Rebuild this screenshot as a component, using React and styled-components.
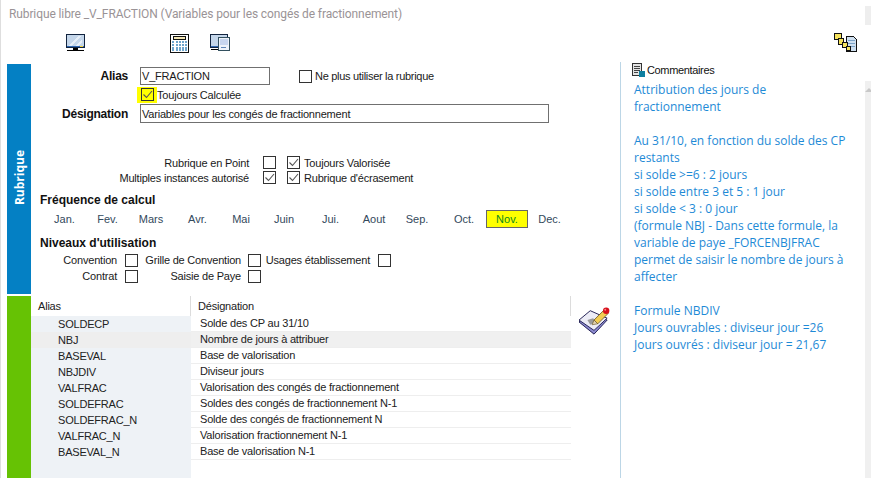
import styled, { createGlobalStyle } from "styled-components"

const GlobalStyle = createGlobalStyle`
  html, body {
    margin: 0;
    background: #fff;
    overflow: hidden;
  }
  * {
    box-sizing: border-box;
  }
`

const MONTHS = [
  { label: "Jan.", width: 49 },
  { label: "Fev.", width: 37 },
  { label: "Mars", width: 50 },
  { label: "Avr.", width: 43 },
  { label: "Mai", width: 44 },
  { label: "Juin", width: 42 },
  { label: "Jui.", width: 51 },
  { label: "Aout", width: 36 },
  { label: "Sep.", width: 50 },
  { label: "Oct.", width: 44 },
  { label: "Nov.", width: 42, active: true },
  { label: "Dec.", width: 43 },
]

const VARIABLES = [
  ["SOLDECP", "Solde des CP au 31/10"],
  ["NBJ", "Nombre de jours à attribuer"],
  ["BASEVAL", "Base de valorisation"],
  ["NBJDIV", "Diviseur jours"],
  ["VALFRAC", "Valorisation des congés de fractionnement"],
  ["SOLDEFRAC", "Soldes des congés de fractionnement N-1"],
  ["SOLDEFRAC_N", "Solde des congés de fractionnement N"],
  ["VALFRAC_N", "Valorisation fractionnement N-1"],
  ["BASEVAL_N", "Base de valorisation N-1"],
]

const COMMENT = [
  "Attribution des jours de",
  "fractionnement",
  "",
  "Au 31/10, en fonction du solde des CP",
  "restants",
  "si solde >=6 : 2 jours",
  "si solde entre 3 et 5 : 1 jour",
  "si solde < 3 : 0 jour",
  "(formule NBJ - Dans cette formule, la",
  "variable de paye _FORCENBJFRAC",
  "permet de saisir le nombre de jours à",
  "affecter",
  "",
  "Formule NBDIV",
  "Jours ouvrables : diviseur jour =26",
  "Jours ouvrés : diviseur jour = 21,67",
]

const MonitorIcon = () => (
  <svg width="19" height="18" viewBox="0 0 19 18" shapeRendering="crispEdges">
    <rect x="0.5" y="0.5" width="18" height="13" fill="#c4d6ea" stroke="#12243f" />
    <path d="M2 12 L12 2 H15 L5 12Z M9 12 L16 5 V8 L12 12Z" fill="#e6eef7" />
    <rect x="1" y="12" width="17" height="1" fill="#2f66b0" />
    <rect x="14" y="12" width="3" height="1" fill="#f4d63c" />
    <rect x="7" y="14" width="5" height="2" fill="#000" />
    <rect x="1" y="16" width="17" height="1" fill="#000" />
  </svg>
)

const CalculatorIcon = () => (
  <svg width="19" height="19" viewBox="0 0 19 19" shapeRendering="crispEdges">
    <rect x="0.5" y="0.5" width="18" height="18" fill="#fff" stroke="#111" />
    <rect x="3.5" y="2.5" width="12" height="3" fill="#f3e6b4" stroke="#111" />
    {[7, 10, 13, 15].map((y) =>
      [2, 6, 9, 12, 15].map((x) => (
        <rect key={`${x}-${y}`} x={x} y={y} width="2" height="2" fill="#6fa5cc" />
      ))
    )}
  </svg>
)

const WindowsIcon = () => (
  <svg width="20" height="18" viewBox="0 0 20 18" shapeRendering="crispEdges">
    <rect x="0.5" y="0.5" width="17" height="13" fill="#c4d6ea" stroke="#12243f" />
    <rect x="1" y="12" width="12" height="1" fill="#2f66b0" />
    <rect x="1" y="15" width="9" height="1" fill="#000" />
    <rect x="8.5" y="3.5" width="11" height="13" fill="#eef3fa" stroke="#33505f" strokeWidth="1" />
    <rect x="10" y="5" width="8" height="6" fill="#c8d6ef" />
    <rect x="11" y="13" width="5" height="1" fill="#5f86b8" />
  </svg>
)

const LinkIcon = () => (
  <svg width="23" height="20" viewBox="0 0 23 20" shapeRendering="crispEdges">
    <path d="M12.5 3.5 H19.5 L22.5 6.5 V18.5 H12.5Z" fill="#cfe0f0" stroke="#111" />
    <rect x="14" y="7" width="7" height="1" fill="#7ba3c8" />
    <rect x="14" y="10" width="7" height="1" fill="#7ba3c8" />
    <rect x="14" y="13" width="7" height="1" fill="#7ba3c8" />
    <rect x="0.5" y="0.5" width="7" height="6" fill="#f6e35c" stroke="#111" />
    <rect x="4.5" y="5.5" width="5" height="6" fill="#f6e35c" stroke="#111" />
    <rect x="8.5" y="9.5" width="5" height="5" fill="#f6e35c" stroke="#111" />
    <rect x="12.5" y="13.5" width="4" height="4" fill="#f6e35c" stroke="#111" />
  </svg>
)

const NoteIcon = () => (
  <svg width="13" height="14" viewBox="0 0 13 14" shapeRendering="crispEdges">
    <rect x="0.5" y="0.5" width="9" height="12" fill="#e4e4e4" stroke="#333" />
    <rect x="2" y="3" width="6" height="1" fill="#444" />
    <rect x="2" y="5" width="6" height="1" fill="#444" />
    <rect x="2" y="7" width="6" height="1" fill="#444" />
    <rect x="2" y="9" width="4" height="1" fill="#444" />
    <rect x="7" y="8" width="6" height="6" fill="#0e7fa0" />
  </svg>
)

const PencilIcon = () => (
  <svg width="32" height="30" viewBox="0 0 34 32">
    <path d="M1 17 L13 7 L31 15 L17 30Z" fill="#8d8bd0" stroke="#1d1b4f" />
    <path d="M1 15 L13 5 L31 13 L17 26Z" fill="#ececf6" stroke="#1d1b4f" />
    <path d="M10 15 L16 13 L20 17 L13 20Z" fill="#9a9a9a" />
    <path d="M17 15 L28 4 L32 8 L21 19Z" fill="#f3cd52" stroke="#5b4510" strokeWidth="0.8" />
    <path d="M17 15 L21 19 L15 20Z" fill="#e3d3b0" stroke="#5b4510" strokeWidth="0.6" />
    <circle cx="30" cy="5" r="3.4" fill="#d8101c" />
    <circle cx="29" cy="4" r="1" fill="#f58a8a" />
  </svg>
)

const CheckBox = ({ checked }) => (
  <Box>
    {checked && (
      <svg width="11" height="11" viewBox="0 0 11 11">
        <path d="M1.5 5.5 L4.5 8.5 L10 2" fill="none" stroke="#555" strokeWidth="1.1" />
      </svg>
    )}
  </Box>
)

export default function App() {
  return (
    <Page>
      <GlobalStyle />
      <RedMark />
      <ScrollCap />
      <TitleBar>Rubrique libre _V_FRACTION (Variables pour les congés de fractionnement)</TitleBar>
      <Toolbar>
        <ToolSlot $width={104}><MonitorIcon /></ToolSlot>
        <ToolSlot $width={40}><CalculatorIcon /></ToolSlot>
        <ToolSlot $width={20}><WindowsIcon /></ToolSlot>
        <ToolEnd><LinkIcon /></ToolEnd>
      </Toolbar>
      <Main>
        <Sections>
          <RubriqueSection>
            <SideTab $color="#0480c4"><span>Rubrique</span></SideTab>
            <RubriqueBody>
              <FieldRow $height={18}>
                <FieldLabel>Alias</FieldLabel>
                <TextBox $width={130}>V_FRACTION</TextBox>
                <InlineCheck>
                  <CheckBox />
                  <FormText $spacing={-0.3}>Ne plus utiliser la rubrique</FormText>
                </InlineCheck>
              </FieldRow>
              <CalcRow>
                <Highlight><CheckBox checked /></Highlight>
                <FormText>Toujours Calculée</FormText>
              </CalcRow>
              <FieldRow $height={19}>
                <FieldLabel>Désignation</FieldLabel>
                <TextBox $width={409}>Variables pour les congés de fractionnement</TextBox>
              </FieldRow>
              <OptionsGrid>
                <OptionLabel>Rubrique en Point</OptionLabel>
                <CheckBox />
                <CheckBox checked />
                <FormText>Toujours Valorisée</FormText>
                <OptionLabel>Multiples instances autorisé</OptionLabel>
                <CheckBox checked />
                <CheckBox checked />
                <FormText>Rubrique d'écrasement</FormText>
              </OptionsGrid>
              <GroupTitle $top={7}>Fréquence de calcul</GroupTitle>
              <MonthRow>
                {MONTHS.map((m) => (
                  <Month key={m.label} $width={m.width} $active={m.active}>{m.label}</Month>
                ))}
              </MonthRow>
              <GroupTitle $top={7}>Niveaux d'utilisation</GroupTitle>
              <LevelsGrid>
                <OptionLabel>Convention</OptionLabel>
                <CheckBox />
                <OptionLabel>Grille de Convention</OptionLabel>
                <CheckBox />
                <OptionLabel>Usages établissement</OptionLabel>
                <CheckBox />
                <OptionLabel>Contrat</OptionLabel>
                <CheckBox />
                <OptionLabel>Saisie de Paye</OptionLabel>
                <CheckBox />
              </LevelsGrid>
            </RubriqueBody>
          </RubriqueSection>
          <VariablesSection>
            <SideTab $color="#66c204" />
            <Table>
              <HeaderRow>
                <HeaderCell $width={160} $pad={7}>Alias</HeaderCell>
                <HeaderCell $width={380} $pad={7}>Désignation</HeaderCell>
              </HeaderRow>
              {VARIABLES.map(([alias, label]) => (
                <Row key={alias} $selected={alias === "NBJ"}>
                  <AliasCell>{alias}</AliasCell>
                  <LabelCell>{label}</LabelCell>
                </Row>
              ))}
              <FillerRow><AliasCell /></FillerRow>
            </Table>
            <EditSlot><PencilIcon /></EditSlot>
          </VariablesSection>
        </Sections>
        <CommentPanel>
          <CommentHeader>
            <NoteIcon />
            <FormText $spacing={-0.35}>Commentaires</FormText>
          </CommentHeader>
          <CommentBody>
            <CommentText>
              {COMMENT.map((line, i) => (
                <CommentLine key={i}>{line}</CommentLine>
              ))}
            </CommentText>
            <ScrollTrack>
              <svg width="6" height="6" viewBox="0 0 6 6">
                <path d="M0 5 L4 1 L6 3 V5Z" fill="#c8c8c8" />
              </svg>
            </ScrollTrack>
          </CommentBody>
        </CommentPanel>
      </Main>
    </Page>
  )
}

const Page = styled.div`
  position: relative;
  width: 871px;
  height: 478px;
  display: flex;
  flex-direction: column;
  overflow: hidden;
  background: #fff;
  border-left: 1px solid #dedede;
  font-family: "Liberation Sans", Arial, sans-serif;
  font-size: 11px;
  letter-spacing: -0.2px;
  color: #1a1a1a;
`

const RedMark = styled.div`
  position: absolute;
  left: -1px;
  top: 207px;
  width: 1px;
  height: 25px;
  background: #e0525c;
`

const ScrollCap = styled.div`
  position: absolute;
  right: 0;
  top: 6px;
  width: 6px;
  height: 19px;
  background: #eeeeee;
`

const TitleBar = styled.div`
  height: 28px;
  padding: 6px 0 0 8px;
  font-family: Roboto, sans-serif;
  font-size: 12px;
  line-height: 16px;
  letter-spacing: -0.11px;
  color: #9a9396;
  white-space: nowrap;
`

const Toolbar = styled.div`
  height: 36px;
  display: flex;
  align-items: flex-start;
  padding: 6px 14px 0 65px;
`

const ToolSlot = styled.div`
  width: ${(p) => p.$width}px;
  height: 19px;
`

const ToolEnd = styled.div`
  margin-left: auto;
  margin-top: -1px;
`

const Main = styled.div`
  flex: 1;
  min-height: 0;
  display: flex;
`

const Sections = styled.div`
  width: 619px;
  padding-left: 6px;
  display: flex;
  flex-direction: column;
  gap: 2px;
`

const RubriqueSection = styled.section`
  height: 230px;
  display: flex;
`

const VariablesSection = styled.section`
  flex: 1;
  min-height: 0;
  display: flex;
`

const SideTab = styled.div`
  width: 24px;
  flex: none;
  display: flex;
  align-items: center;
  justify-content: center;
  background: ${(p) => p.$color};
  color: #fff;
  font-family: "Open Sans", sans-serif;
  font-weight: 700;
  font-size: 12px;
  letter-spacing: 0;

  span {
    writing-mode: vertical-rl;
    transform: rotate(180deg);
    margin-bottom: 3px;
  }
`

const RubriqueBody = styled.div`
  flex: 1;
  padding-top: 3px;
`

const FieldRow = styled.div`
  height: ${(p) => p.$height}px;
  display: flex;
  align-items: center;
`

const FieldLabel = styled.div`
  width: 97px;
  margin-right: 12px;
  text-align: right;
  font-size: 12px;
  font-weight: 700;
  letter-spacing: -0.25px;
  color: #111;
`

const TextBox = styled.div`
  width: ${(p) => p.$width}px;
  height: 100%;
  padding-left: 1px;
  display: flex;
  align-items: center;
  border: 1px solid #707070;
  white-space: nowrap;
`

const InlineCheck = styled.div`
  display: flex;
  align-items: center;
  gap: 3px;
  margin-left: 29px;
`

const FormText = styled.span`
  white-space: nowrap;
  letter-spacing: ${(p) => (p.$spacing !== undefined ? `${p.$spacing}px` : "inherit")};
`

const Box = styled.span`
  width: 13px;
  height: 13px;
  flex: none;
  display: inline-flex;
  align-items: center;
  justify-content: center;
  border: 1px solid #333;
  background: transparent;
`

const CalcRow = styled.div`
  height: 19px;
  display: flex;
  align-items: center;
  padding-left: 106px;
`

const Highlight = styled.div`
  width: 20px;
  height: 16px;
  display: flex;
  align-items: center;
  justify-content: center;
  background: #ffff00;
`

const OptionsGrid = styled.div`
  display: grid;
  grid-template-columns: 218px 13px 13px auto;
  grid-auto-rows: 15px;
  align-items: center;
  margin-top: 32px;

  & > :nth-child(4n + 2) {
    margin-left: 14px;
  }
  & > :nth-child(4n + 3) {
    margin-left: 25px;
  }
  & > :nth-child(4n) {
    margin-left: 29px;
  }
`

const OptionLabel = styled.span`
  text-align: right;
  white-space: nowrap;
`

const GroupTitle = styled.div`
  margin: ${(p) => p.$top}px 0 0 9px;
  height: 16px;
  line-height: 16px;
  font-size: 12px;
  font-weight: 700;
  letter-spacing: 0;
  color: #111;
`

const MonthRow = styled.div`
  display: flex;
  align-items: center;
  height: 18px;
  margin-top: 2px;
  padding-left: 9px;
`

const Month = styled.div`
  width: ${(p) => p.$width}px;
  height: 18px;
  flex: none;
  display: flex;
  align-items: center;
  justify-content: center;
  letter-spacing: 0;
  color: ${(p) => (p.$active ? "#0a8a1e" : "#33495c")};
  background: ${(p) => (p.$active ? "#ffff00" : "transparent")};
  border: 1px solid ${(p) => (p.$active ? "#666" : "transparent")};
`

const LevelsGrid = styled.div`
  display: grid;
  grid-template-columns: 86px 21px 103px 20px 109px 21px;
  grid-auto-rows: 16px;
  align-items: center;
  margin-top: 1px;

  & > :nth-child(even) {
    justify-self: end;
  }
`

const Table = styled.div`
  width: 540px;
  display: flex;
  flex-direction: column;
  color: #222;
`

const HeaderRow = styled.div`
  height: 20px;
  flex: none;
  display: flex;
`

const HeaderCell = styled.div`
  width: ${(p) => p.$width}px;
  padding-left: ${(p) => p.$pad}px;
  line-height: 21px;
  border-right: 1px solid #dcdcdc;
`

const Row = styled.div`
  height: 16px;
  flex: none;
  display: flex;
  background: ${(p) => (p.$selected ? "#f0f0f0" : "transparent")};

  & > :first-child {
    background: ${(p) => (p.$selected ? "#eeeeee" : "#eef2f6")};
  }
`

const AliasCell = styled.div`
  width: 160px;
  height: 100%;
  padding-left: 27px;
  line-height: 16px;
  background: #eef2f6;
`

const LabelCell = styled.div`
  flex: 1;
  padding-left: 9px;
  line-height: 15px;
  border-bottom: 1px solid #eeeeee;
`

const FillerRow = styled.div`
  flex: 1;
  min-height: 0;
`

const EditSlot = styled.div`
  padding: 10px 0 0 7px;
`

const CommentPanel = styled.aside`
  flex: 1;
  min-width: 0;
  display: flex;
  flex-direction: column;
  border-left: 1px solid #bcd6e6;
  margin-top: -2px;
`

const CommentHeader = styled.div`
  height: 16px;
  margin-bottom: 3px;
  display: flex;
  align-items: center;
  gap: 2px;
  padding-left: 11px;
  color: #111;
`

const CommentBody = styled.div`
  flex: 1;
  min-height: 0;
  display: flex;
  justify-content: space-between;
`

const CommentText = styled.div`
  padding: 0 0 0 13px;
  font-family: "Open Sans", sans-serif;
  font-size: 12px;
  line-height: 17px;
  letter-spacing: 0;
  color: #1e8ad6;
`

const CommentLine = styled.div`
  height: 17px;
  white-space: nowrap;
`

const ScrollTrack = styled.div`
  width: 6px;
  background: #f0f0f0;
  padding-top: 6px;
  line-height: 0;
`
